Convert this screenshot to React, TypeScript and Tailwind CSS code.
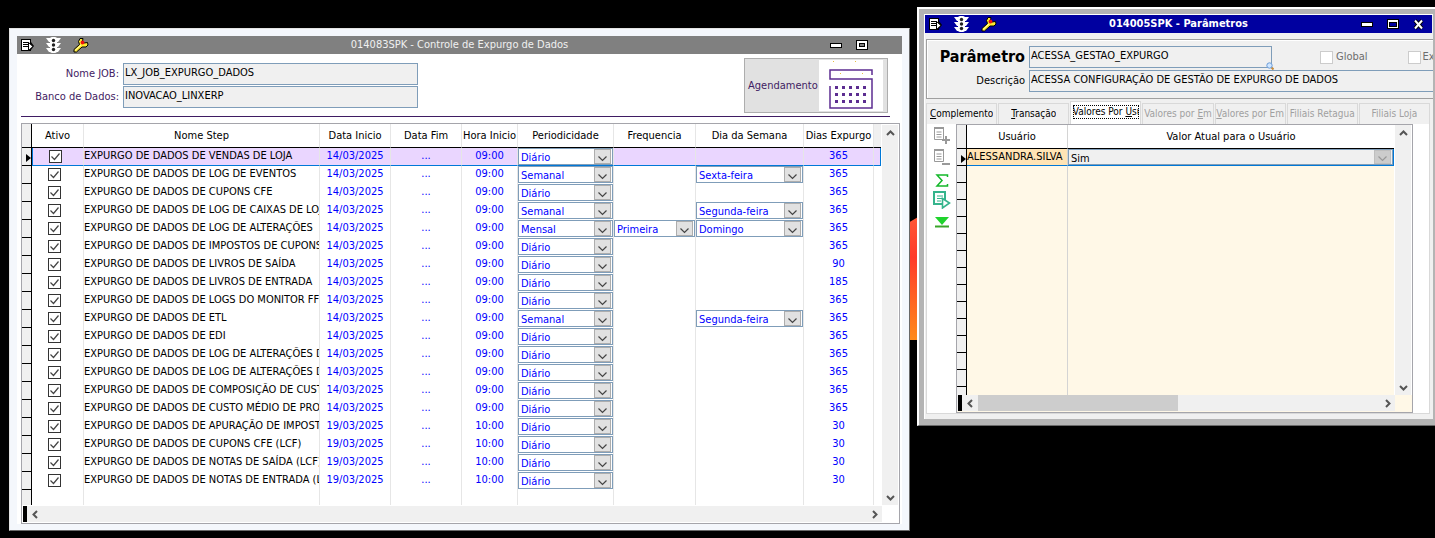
import React from 'react';

type Step = {
  nome: string;
  data: string;
  hora: string;
  periodo: string;
  frequencia?: string;
  dia?: string;
  dias: string;
};

const STEPS: Step[] = [
  { nome: 'EXPURGO DE DADOS DE VENDAS DE LOJA', data: '14/03/2025', hora: '09:00', periodo: 'Diário', dias: '365' },
  { nome: 'EXPURGO DE DADOS DE LOG DE EVENTOS', data: '14/03/2025', hora: '09:00', periodo: 'Semanal', dia: 'Sexta-feira', dias: '365' },
  { nome: 'EXPURGO DE DADOS DE CUPONS CFE', data: '14/03/2025', hora: '09:00', periodo: 'Diário', dias: '365' },
  { nome: 'EXPURGO DE DADOS DE LOG DE CAIXAS DE LOJ', data: '14/03/2025', hora: '09:00', periodo: 'Semanal', dia: 'Segunda-feira', dias: '365' },
  { nome: 'EXPURGO DE DADOS DE LOG DE ALTERAÇÕES', data: '14/03/2025', hora: '09:00', periodo: 'Mensal', frequencia: 'Primeira', dia: 'Domingo', dias: '365' },
  { nome: 'EXPURGO DE DADOS DE IMPOSTOS DE CUPONS', data: '14/03/2025', hora: '09:00', periodo: 'Diário', dias: '365' },
  { nome: 'EXPURGO DE DADOS DE LIVROS DE SAÍDA', data: '14/03/2025', hora: '09:00', periodo: 'Diário', dias: '90' },
  { nome: 'EXPURGO DE DADOS DE LIVROS DE ENTRADA', data: '14/03/2025', hora: '09:00', periodo: 'Diário', dias: '185' },
  { nome: 'EXPURGO DE DADOS DE LOGS DO MONITOR FFC', data: '14/03/2025', hora: '09:00', periodo: 'Diário', dias: '365' },
  { nome: 'EXPURGO DE DADOS DE ETL', data: '14/03/2025', hora: '09:00', periodo: 'Semanal', dia: 'Segunda-feira', dias: '365' },
  { nome: 'EXPURGO DE DADOS DE EDI', data: '14/03/2025', hora: '09:00', periodo: 'Diário', dias: '365' },
  { nome: 'EXPURGO DE DADOS DE LOG DE ALTERAÇÕES D', data: '14/03/2025', hora: '09:00', periodo: 'Diário', dias: '365' },
  { nome: 'EXPURGO DE DADOS DE LOG DE ALTERAÇÕES D', data: '14/03/2025', hora: '09:00', periodo: 'Diário', dias: '365' },
  { nome: 'EXPURGO DE DADOS DE COMPOSIÇÃO DE CUST', data: '14/03/2025', hora: '09:00', periodo: 'Diário', dias: '365' },
  { nome: 'EXPURGO DE DADOS DE CUSTO MÉDIO DE PROD', data: '14/03/2025', hora: '09:00', periodo: 'Diário', dias: '365' },
  { nome: 'EXPURGO DE DADOS DE APURAÇÃO DE IMPOST', data: '19/03/2025', hora: '10:00', periodo: 'Diário', dias: '30' },
  { nome: 'EXPURGO DE DADOS DE CUPONS CFE (LCF)', data: '19/03/2025', hora: '10:00', periodo: 'Diário', dias: '30' },
  { nome: 'EXPURGO DE DADOS DE NOTAS DE SAÍDA (LCF)', data: '19/03/2025', hora: '10:00', periodo: 'Diário', dias: '30' },
  { nome: 'EXPURGO DE DADOS DE NOTAS DE ENTRADA (LC', data: '19/03/2025', hora: '10:00', periodo: 'Diário', dias: '30' },
];

const HEADERS = ['Ativo', 'Nome Step', 'Data Inicio', 'Data Fim', 'Hora Inicio', 'Periodicidade', 'Frequencia', 'Dia da Semana', 'Dias Expurgo'];

const TitleIcons: React.FC = () => (
  <div className="flex items-center gap-3">
    {/* Menu */}
    <svg width="13" height="13" viewBox="0 0 13 13">
      <path d="M0 0h10v3l3 4-3 4v1H0z" fill="#000" />
      <path d="M1 1h8v10H1z" fill="#fff" />
      <path d="M2 3.500h6M2 5.500h5M2 7.500h5" stroke="#000" />
      <path d="M7.500 3.500L12 7.500l-4.500 4z" fill="#fff" stroke="#000" />
    </svg>
    {/* Traffic light */}
    <svg width="15" height="16" viewBox="0 0 15 16">
      <path d="M0 1h15l-3 4H3zM0 6h15l-3 4H3zM0 11h15l-3 4H3z" fill="#fff" />
      <rect x="4" width="7" height="16" rx="2" fill="#fff" />
      <circle cx="7.500" cy="3.500" r="1.700" fill="#222" />
      <circle cx="7.500" cy="8" r="1.700" fill="#222" />
      <circle cx="7.500" cy="12.500" r="1.700" fill="#222" />
    </svg>
    {/* Wrench */}
    <svg width="16" height="16" viewBox="0 0 16 16">
      <path d="M1 12.500L6.500 7.500 5.500 4.500 7 1.500h3L9.500 4l1.500 2 3.500-.5.5 2.500-2 2H9l-5.500 5H1z" fill="#ffe92e" stroke="#000" />
      <path d="M2 13.500l6-5.500" stroke="#fffbc0" />
      <circle cx="9.500" cy="5.500" r="1.900" fill="#f01010" />
    </svg>
  </div>
);

const MinimizeIcon: React.FC = () => (
  <svg width="12" height="5" viewBox="0 0 12 5" shapeRendering="crispEdges">
    <path d="M0 0h12v5H0z" fill="#000" />
    <path d="M1 1h10v3H1z" fill="#fff" />
  </svg>
);

const MaximizeIcon: React.FC<{ wide?: boolean }> = ({ wide }) => (
  <svg width="12" height="10" viewBox="0 0 12 10" shapeRendering="crispEdges">
    <path d="M0 0h12v10H0z" fill="#000" />
    <path d="M1 1h10v8H1z" fill="#fff" />
    <path d={wide ? 'M2 3h8v5H2z' : 'M3 3h6v4H3z'} fill="#000" />
    <path d={wide ? 'M3 4h6v3H3z' : 'M4 4h4v2H4z'} fill={wide ? '#0000a0' : '#808080'} />
  </svg>
);

const ARROWS = {
  up: 'M1 6l3.500-3.500L8 6',
  down: 'M1 3l3.500 3.500L8 3',
  left: 'M6 1L2.500 4.500 6 8',
  right: 'M3 1l3.500 3.500L3 8',
};

const ScrollButton: React.FC<{ dir: keyof typeof ARROWS; label: string }> = ({ dir, label }) => (
  <button aria-label={label} className="flex h-4 w-4 shrink-0 items-center justify-center bg-[#f0f0f0]">
    <svg width="9" height="9" viewBox="0 0 9 9">
      <path d={ARROWS[dir]} fill="none" stroke="#555" strokeWidth="2" />
    </svg>
  </button>
);

const VerticalScroll: React.FC = () => (
  <div className="flex w-4 shrink-0 flex-col justify-between bg-[#f0f0f0]">
    <ScrollButton dir="up" label="Rolar para cima" />
    <ScrollButton dir="down" label="Rolar para baixo" />
  </div>
);

const Combo: React.FC<{ value: string; label: string; disabled?: boolean }> = ({ value, label, disabled }) => (
  <div className={`relative ${disabled ? 'h-4' : 'h-[17px]'}`}>
    <select
      aria-label={label}
      disabled={disabled}
      className={`block h-full w-full appearance-none border border-[#7f9db9] pt-[2px] pl-[2px] leading-[13px] opacity-100 ${disabled ? 'bg-[#f0f0f0] text-black' : 'bg-white text-[#0000ff]'}`}
    >
      <option>{value}</option>
    </select>
    <span className={`pointer-events-none absolute inset-y-px right-[2px] flex w-[17px] items-center justify-center border ${disabled ? 'border-[#bfbfbf] bg-[#cccccc] text-[#999]' : 'border-[#adadad] bg-[#e1e1e1] text-[#444]'}`}>
      <svg width="9" height="6" viewBox="0 0 9 6" className="mt-1">
        <path d="M.5 .5l4 4 4-4" fill="none" stroke="currentColor" strokeWidth="1.200" />
      </svg>
    </span>
  </div>
);

const RowMarker: React.FC = () => (
  <svg width="5" height="8" viewBox="0 0 5 8" className="mt-[6px] ml-auto">
    <path d="M0 0l5 4-5 4z" fill="#000" />
  </svg>
);

const CalendarIcon: React.FC = () => (
  <svg width="64" height="51" viewBox="0 0 64 51" className="shrink-0 bg-white">
    <path d="M53 15v-5H11v9h42v29H11V26" fill="none" stroke="#5c2d91" strokeWidth="1.500" />
    {[27, 34, 41].map((y) =>
      [18, 25, 32, 39, 46].map((x) => <rect key={`${x}-${y}`} x={x - 2} y={y - 1} width="3" height="3" fill="#5c2d91" />)
    )}
    <path d="M14 1h1v1h-1zM36 1h1v1h-1zM21 13h1v1h-1zM43 13h1v1h-1z" fill="#e8c040" />
  </svg>
);

const ExpurgoWindow: React.FC = () => {
  const line = 'border-r border-r-[#e6e6e6]';
  return (
    <section className="relative mt-7 min-w-0 flex-1 self-start border border-t-[#e3e3e3] border-r-[#696969] border-b-[#696969] border-l-[#e3e3e3] bg-[#f4f7fc] px-[7px] pt-[7px] pb-[6px]">
      <div className="bg-white">
        <header className="grid h-[18px] grid-cols-[1fr_auto_1fr] items-center bg-[#808080] px-1">
          <TitleIcons />
          <h1 className="text-[11px] text-[#f0f0f0]">014083SPK - Controle de Expurgo de Dados</h1>
          <div className="flex items-center justify-end gap-[14px] pr-[30px]">
            <button aria-label="Minimizar"><MinimizeIcon /></button>
            <button aria-label="Maximizar"><MaximizeIcon /></button>
          </div>
        </header>

        <div className="mr-3 ml-1 flex items-start justify-between border-b border-[#3f1c63] pt-1 pr-[2px] pb-[3px]">
          <div className="grid grid-cols-[98px_295px] items-center gap-x-1 gap-y-px pt-[5px] text-[#3f1c63]">
            <label htmlFor="job" className="text-right">Nome JOB:</label>
            <input id="job" readOnly value="LX_JOB_EXPURGO_DADOS" className="h-[22px] border border-[#7f9db9] bg-[#f0f0f0] px-[1px] pb-[3px] text-black" />
            <label htmlFor="banco" className="text-right">Banco de Dados:</label>
            <input id="banco" readOnly value="INOVACAO_LINXERP" className="h-[22px] border border-[#7f9db9] bg-[#f0f0f0] px-[1px] pb-[3px] text-black" />
          </div>
          <button className="flex h-[55px] w-[144px] items-center justify-between border border-[#adadad] bg-[#e1e1e1] pr-1 pl-[3px] text-[#3f1c63]">
            Agendamento
            <CalendarIcon />
          </button>
        </div>

        <div className="mt-[6px] mr-[2px] ml-1 border border-[#a5a5ab]">
          <div className="flex pr-px">
            <div className="min-w-0 flex-1">
              <table className="w-full table-fixed border-separate border-spacing-0">
                <colgroup>
                  <col className="w-[10px]" />
                  <col className="w-[52px]" />
                  <col />
                  <col className="w-[71px]" />
                  <col className="w-[71px]" />
                  <col className="w-[56px]" />
                  <col className="w-[96px]" />
                  <col className="w-[82px]" />
                  <col className="w-[108px]" />
                  <col className="w-[70px]" />
                  <col className="w-[7px]" />
                </colgroup>
                <thead>
                  <tr className="h-6">
                    <th className="border-r border-b border-black bg-[#f0f0f0] p-0" />
                    {HEADERS.map((h) => (
                      <th key={h} className="border-r border-b border-r-[#e6e6e6] border-b-black p-0 font-normal whitespace-nowrap">{h}</th>
                    ))}
                    <th className="border-b border-black bg-[#f0f0f0] p-0" />
                  </tr>
                </thead>
                <tbody className="text-center text-[#0000ff]">
                  {STEPS.map((s, i) => {
                    const selected = i === 0;
                    const cell = `${line} ${selected ? 'border-b border-b-[#0078d7] bg-[#ead6ff]' : ''} p-0 align-top leading-4`;
                    return (
                      <tr key={i} className="h-[18px]">
                        <td className="border-r border-b border-black bg-[#f0f0f0] p-0 align-top">{selected && <RowMarker />}</td>
                        <td className={`${cell} ${selected ? 'border-l border-l-[#0078d7]' : ''}`}>
                          <span className="relative mt-[2px] ml-4 block h-[13px] w-[13px]">
                            <input type="checkbox" defaultChecked aria-label={`Ativo: ${s.nome}`} className="block h-[13px] w-[13px] appearance-none border border-[#333] bg-white" />
                            <svg width="13" height="13" viewBox="0 0 13 13" className="pointer-events-none absolute inset-0">
                              <path d="M2.500 6.500l3 3 5-6" fill="none" stroke="#444" strokeWidth="1.200" />
                            </svg>
                          </span>
                        </td>
                        <td className={`${cell} overflow-hidden text-left whitespace-nowrap text-black`}>{s.nome}</td>
                        <td className={cell}>{s.data}</td>
                        <td className={cell}>...</td>
                        <td className={cell}>{s.hora}</td>
                        <td className={cell}><Combo value={s.periodo} label="Periodicidade" /></td>
                        <td className={cell}>{s.frequencia && <Combo value={s.frequencia} label="Frequencia" />}</td>
                        <td className={cell}>{s.dia && <Combo value={s.dia} label="Dia da Semana" />}</td>
                        <td className={cell}>{s.dias}</td>
                        <td className={selected ? 'border-r border-b border-[#0078d7] bg-[#ead6ff] p-0' : 'p-0'} />
                      </tr>
                    );
                  })}
                  <tr className="h-[15px]">
                    <td className="border-r border-black bg-[#f0f0f0] p-0" />
                    {HEADERS.map((h) => <td key={h} className={`${line} p-0`} />)}
                    <td className="p-0" />
                  </tr>
                </tbody>
              </table>
            </div>
            <div className="mt-px ml-px flex"><VerticalScroll /></div>
          </div>
          <div className="mt-px mr-[17px] mb-px ml-px flex bg-[#f0f0f0]">
            <span className="w-1 bg-black" />
            <ScrollButton dir="left" label="Rolar para a esquerda" />
            <span className="flex-1" />
            <ScrollButton dir="right" label="Rolar para a direita" />
          </div>
        </div>
      </div>
    </section>
  );
};

const Tab: React.FC<{ active?: boolean; disabled?: boolean; children: React.ReactNode }> = ({ active, disabled, children }) => (
  <button
    role="tab"
    aria-selected={!!active}
    disabled={disabled}
    className={`flex min-w-0 flex-1 items-center justify-center border border-b-0 border-[#d9d9d9] text-[10px] whitespace-nowrap ${active ? 'h-[23px] bg-white pb-[2px]' : 'h-[21px] bg-[#f0f0f0]'} ${disabled ? 'text-[#a0a0a0]' : 'text-black'}`}
  >
    <span className={active ? 'w-[66px] overflow-hidden outline-1 -outline-offset-1 outline-black outline-dotted' : 'max-w-full overflow-hidden'}>{children}</span>
  </button>
);

const SheetIcon: React.FC<{ plus?: boolean }> = ({ plus }) => (
  <svg width="18" height="18" viewBox="0 0 18 18" fill="none" stroke="#999">
    <path d="M1.500 1.500h9v12h-9z" />
    <path d="M1 2h10" strokeWidth="2" />
    <path d="M3.500 6h5M3.500 8.500h5M3.500 11h5" />
    <path d={plus ? 'M9 14h8M13 10v8' : 'M9 16h8'} strokeWidth="2" />
  </svg>
);

const SideTools: React.FC = () => (
  <div className="flex w-[29px] flex-col items-center pt-[2px]">
    <button aria-label="Incluir linha"><SheetIcon plus /></button>
    <button aria-label="Excluir linha" className="mt-1"><SheetIcon /></button>
    <button aria-label="Somar" className="mt-2">
      <svg width="14" height="13" viewBox="0 0 14 13">
        <path d="M12.500 3V1H2l5 5.500L2 12h10.500v-2" fill="none" stroke="#14b82a" strokeWidth="1.500" />
      </svg>
    </button>
    <button aria-label="Executar" className="mt-1">
      <svg width="18" height="18" viewBox="0 0 18 18">
        <path d="M1 1h11v12H1z" fill="#fff" stroke="#35b48c" strokeWidth="2" />
        <path d="M4 5h6M4 7.500h6M4 10h4" stroke="#35b48c" />
        <path d="M9.500 7.500l7 4.500-7 5z" fill="#fff" stroke="#35b48c" strokeWidth="1.600" />
      </svg>
    </button>
    <button aria-label="Último" className="mt-2">
      <svg width="14" height="11" viewBox="0 0 14 11">
        <path d="M0 0h14L7 8z" fill="#1fd32c" />
        <path d="M0 9.500h14" stroke="#3aa52a" strokeWidth="2" />
      </svg>
    </button>
  </div>
);

const ParametrosWindow: React.FC = () => (
  <section className="relative mt-[7px] w-[518px] shrink-0 self-start overflow-hidden border-t-2 border-b border-l-2 border-t-white border-b-[#696969] border-l-white bg-[#b4b4b4] pt-[5px] pr-[2px] pb-[6px] pl-[5px]">
    <div className="border-t border-l border-white bg-[#f0f0f0] pb-[5px]">
      <header className="mr-px grid h-[18px] grid-cols-[1fr_auto_1fr] items-center bg-[#0000a0] px-1">
        <TitleIcons />
        <h2 className="text-[11px] font-bold text-white">014005SPK - Parâmetros</h2>
        <div className="flex items-center justify-end gap-[14px] pr-1">
          <button aria-label="Minimizar"><MinimizeIcon /></button>
          <button aria-label="Maximizar"><MaximizeIcon wide /></button>
          <button aria-label="Fechar">
            <svg width="11" height="11" viewBox="0 0 11 11">
              <path d="M2 1.500l7 8M9 1.500l-7 8" stroke="#000" strokeWidth="4" />
              <path d="M2 1.500l7 8M9 1.500l-7 8" stroke="#fff" strokeWidth="2" />
            </svg>
          </button>
        </div>
      </header>

      <div className="mt-[6px] ml-px overflow-hidden border border-r-0 border-[#a0a0a0] pt-[6px] pb-[6px] shadow-[inset_1px_1px_0_#fff]">
        <div className="grid grid-cols-[98px_minmax(0,1fr)] items-center gap-x-1 gap-y-[2px]">
          <label htmlFor="param" className="text-right text-base leading-5 font-bold">Parâmetro</label>
          <div className="flex items-center">
            <div className="relative w-[243px] shrink-0">
              <input id="param" readOnly value="ACESSA_GESTAO_EXPURGO" className="block h-[22px] w-full border border-[#7f9db9] bg-[#f0f0f0] px-[1px] pb-1" />
              <svg width="8" height="8" viewBox="0 0 8 8" className="absolute -right-[2px] -bottom-[2px]">
                <path d="M5 5l2.500 2.500" stroke="#c58a3a" strokeWidth="2" />
                <circle cx="3.500" cy="3.500" r="2.700" fill="#cfe6ff" stroke="#6a9bd8" />
              </svg>
            </div>
            <label className="ml-12 flex shrink-0 items-center gap-[3px] text-[#6d6d6d]">
              <input type="checkbox" disabled className="h-[13px] w-[13px] appearance-none border border-[#ccc] bg-white" />
              Global
            </label>
            <label className="ml-10 flex shrink-0 items-center gap-[2px] text-[#6d6d6d]">
              <input type="checkbox" disabled className="h-[13px] w-[13px] shrink-0 appearance-none border border-[#ccc] bg-white" />
              Ex
            </label>
          </div>
          <label htmlFor="desc" className="text-right">Descrição</label>
          <input id="desc" readOnly value="ACESSA CONFIGURAÇÃO DE GESTÃO DE EXPURGO DE DADOS" className="h-[22px] min-w-0 border border-r-0 border-[#7f9db9] bg-[#f0f0f0] px-[1px] pb-1" />
        </div>
      </div>

      <div role="tablist" className="mt-[2px] mr-[3px] ml-px flex items-end gap-px">
        <Tab><u>C</u>omplemento</Tab>
        <Tab><u>T</u>ransação</Tab>
        <Tab active>Valores Por <u>U</u>su</Tab>
        <Tab disabled>Valores por <u>E</u>m</Tab>
        <Tab disabled><u>V</u>alores por Em</Tab>
        <Tab disabled>Filiais Retagua</Tab>
        <Tab disabled>Filiais Loja</Tab>
      </div>

      <div className="mr-[3px] ml-px flex border border-t-0 border-[#d9d9d9] bg-white pr-4">
        <SideTools />
        <div className="min-w-0 flex-1 border border-[#a5a5ab] bg-[#fff8e7]">
          <div className="flex bg-white pr-px">
            <div className="min-w-0 flex-1">
              <table className="w-full table-fixed border-separate border-spacing-0">
                <colgroup>
                  <col className="w-[10px]" />
                  <col className="w-[101px]" />
                  <col />
                </colgroup>
                <thead>
                  <tr className="h-6">
                    <th className="border-r border-b border-black bg-[#f0f0f0] p-0" />
                    <th className="border-r border-b border-r-[#d4d4d4] border-b-black p-0 font-normal">Usuário</th>
                    <th className="border-b border-black p-0 font-normal">Valor Atual para o Usuário</th>
                  </tr>
                </thead>
                <tbody className="bg-[#fff8e7]">
                  <tr className="h-[17px]">
                    <td className="border-r border-b border-black bg-[#f0f0f0] p-0 align-top"><RowMarker /></td>
                    <td className="overflow-hidden border-r border-b border-r-[#d4d4d4] border-b-[#0078d7] bg-[#ffe4b5] p-0 align-top leading-4 whitespace-nowrap">ALESSANDRA.SILVA</td>
                    <td className="border-r border-b border-[#0078d7] p-0 align-top"><Combo value="Sim" label="Valor Atual para o Usuário" disabled /></td>
                  </tr>
                  {Array.from({ length: 13 }, (_, i) => (
                    <tr key={i} className="h-[17px]">
                      <td className="border-r border-b border-black bg-[#f0f0f0] p-0" />
                      <td className="border-r border-[#d4d4d4] p-0" />
                      <td className="p-0" />
                    </tr>
                  ))}
                  <tr className="h-2">
                    <td className="border-r border-black bg-[#f0f0f0] p-0" />
                    <td className="border-r border-[#d4d4d4] p-0" />
                    <td className="p-0" />
                  </tr>
                </tbody>
              </table>
            </div>
            <div className="ml-px flex"><VerticalScroll /></div>
          </div>
          <div className="mr-[17px] mb-px flex bg-[#f0f0f0]">
            <span className="ml-px w-1 bg-black" />
            <ScrollButton dir="left" label="Rolar para a esquerda" />
            <span className="w-[200px] bg-[#cdcdcd]" />
            <span className="flex-1" />
            <ScrollButton dir="right" label="Rolar para a direita" />
          </div>
        </div>
      </div>
    </div>
  </section>
);

const App: React.FC = () => (
  <main className="relative flex min-h-screen gap-[7px] overflow-hidden bg-black pl-[9px] font-['Tahoma','DejaVu_Sans_Condensed','DejaVu_Sans',sans-serif] text-[11px] leading-[14px] text-black">
    {/* Wallpaper logo showing between the windows */}
    <svg width="24" height="128" viewBox="0 0 24 128" className="absolute top-[213px] right-[510px]">
      <defs>
        <linearGradient id="flame" x1="0" y1="0" x2="0" y2="1">
          <stop offset="0" stopColor="#ff5a36" />
          <stop offset=".35" stopColor="#ff3a2a" />
          <stop offset=".6" stopColor="#ff5a24" />
          <stop offset="1" stopColor="#ff8a1a" />
        </linearGradient>
      </defs>
      <path d="M0 14L24 0v127H0z" fill="url(#flame)" />
    </svg>
    <ExpurgoWindow />
    <ParametrosWindow />
  </main>
);

export default App;
